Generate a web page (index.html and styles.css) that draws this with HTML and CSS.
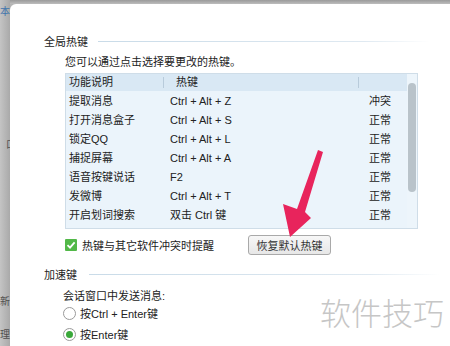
FILE: index.html
```html
<!DOCTYPE html>
<html lang="zh-CN">
  <head>
    <meta charset="UTF-8" />
    <meta name="viewport" content="width=device-width, initial-scale=1.0" />
    <title>热键设置</title>
    <link rel="stylesheet" href="styles.css">
  </head>
  <body>
    <div class="desk">
      <div class="side">
        <div class="side-char blue first">本</div>
        <div class="side-char c2">口</div>
        <div class="side-char c3">示</div>
        <div class="side-char c4">新</div>
        <div class="side-char c5">理</div>
      </div>
      <div class="main">
        <div class="topbar"></div>
        <div class="dialog">
          <div class="group-title">
            <span>全局热键</span>
            <div class="rule"></div>
          </div>
          <div class="desc">您可以通过点击选择要更改的热键。</div>

          <div class="table">
            <div class="cols">
              <div class="row head">
                <div class="c1">功能说明</div>
                <div class="c2">热键</div>
                <div class="c3"></div>
              </div>
              <div class="row"><div class="c1">提取消息</div><div class="c2">Ctrl + Alt + Z</div><div class="c3">冲突</div></div>
              <div class="row"><div class="c1">打开消息盒子</div><div class="c2">Ctrl + Alt + S</div><div class="c3">正常</div></div>
              <div class="row"><div class="c1">锁定QQ</div><div class="c2">Ctrl + Alt + L</div><div class="c3">正常</div></div>
              <div class="row"><div class="c1">捕捉屏幕</div><div class="c2">Ctrl + Alt + A</div><div class="c3">正常</div></div>
              <div class="row"><div class="c1">语音按键说话</div><div class="c2">F2</div><div class="c3">正常</div></div>
              <div class="row"><div class="c1">发微博</div><div class="c2">Ctrl + Alt + T</div><div class="c3">正常</div></div>
              <div class="row"><div class="c1">开启划词搜索</div><div class="c2">双击 Ctrl 键</div><div class="c3">正常</div></div>
            </div>
            <div class="scroll">
              <div class="thumb"></div>
            </div>
          </div>

          <div class="options">
            <label class="check">
              <span class="box">
                <svg width="12" height="12" viewBox="0 0 12 12"><path d="M2.5 6.2 L5 8.6 L9.6 3.4" fill="none" stroke="#fff" stroke-width="1.8"/></svg>
              </span>
              热键与其它软件冲突时提醒
            </label>
            <button class="reset">恢复默认热键</button>
          </div>

          <div class="group-title second">
            <span>加速键</span>
            <div class="rule"></div>
          </div>
          <div class="desc sub">会话窗口中发送消息:</div>
          <label class="radio"><span class="dot"></span>按Ctrl + Enter键</label>
          <label class="radio on"><span class="dot"></span>按Enter键</label>
        </div>
      </div>
    </div>

    <div class="watermark">软件技巧</div>

    <svg class="arrow" width="450" height="346" viewBox="0 0 450 346">
      <polygon points="318,150 323,152 305,212 311,218 290,237 283,204 297,209" fill="#e8245c"/>
    </svg>
  </body>
</html>
```

FILE: styles.css
```css
* {
  box-sizing: border-box;
}
body {
  margin: 0;
  width: 450px;
  height: 346px;
  overflow: hidden;
  font-family: "Liberation Sans", "Noto Sans CJK SC", sans-serif;
  font-size: 11px;
  color: #222;
  background: #b4b4b4;
}
.desk {
  display: flex;
  height: 346px;
}

/* background window peeking out on the left */
.side {
  width: 10px;
  overflow: hidden;
  background: linear-gradient(to right, #c4c4c4, #a9a9a9);
  font-size: 10px;
  line-height: 14px;
  color: #505050;
}
.side-char {
  margin-left: 0;
}
.side-char.blue {
  color: #3f74ad;
}
.first {
  margin-top: 5px;
}
.c2.side-char {
  margin-top: 119px;
}
.c3.side-char {
  margin-top: 18px;
}
.c4.side-char {
  margin-top: 111px;
}
.c5.side-char {
  margin-top: 19px;
}

.main {
  flex: 1;
  display: flex;
  flex-direction: column;
}
.topbar {
  height: 4px;
  background: linear-gradient(to bottom, #9a9a9a, #bdbdbd);
}
.dialog {
  flex: 1;
  background: #fff;
  border-radius: 6px 0 0 0;
  padding: 30px 0 0 34px;
}

.group-title {
  display: flex;
  align-items: center;
  height: 16px;
  line-height: 16px;
}
.group-title span {
  margin-right: 10px;
}
.rule {
  flex: 1;
  height: 1px;
  margin-top: -2px;
  margin-right: 20px;
  background: linear-gradient(to right, #c9dbe8, #dfe9f1 80%, #fff);
}
.group-title.second {
  margin-top: 12px;
}
.group-title.second span {
  margin-right: 12px;
}
.group-title.second .rule {
  margin-right: 10px;
}

.desc {
  margin: 4px 0 0 21px;
  line-height: 16px;
}
.desc.sub {
  margin: 5px 0 0 19px;
}

.table {
  display: flex;
  width: 353px;
  height: 156px;
  margin: 3px 0 0 21px;
  border: 1px solid #cfdde8;
  background: #ebf4fb;
  overflow: hidden;
}
.cols {
  flex: 1;
}
.row {
  display: flex;
  height: 19px;
  line-height: 19px;
  white-space: nowrap;
}
.row.head {
  height: 17px;
  line-height: 17px;
  background: #d9e8f4;
  margin-bottom: 1px;
}
.c1 {
  width: 97px;
  padding-left: 3px;
}
.c2 {
  width: 195px;
  padding-left: 6px;
}
.c3 {
  flex: 1;
  padding-left: 11px;
}
.head .c2 {
  padding-left: 12px;
  border-left: 1px solid #b8cbdb;
  height: 11px;
  line-height: 11px;
  margin-top: 3px;
}
.head .c3 {
  border-left: 1px solid #b8cbdb;
  height: 11px;
  margin-top: 3px;
}
.row:not(.head) .c2 {
  padding-left: 7px;
}
.scroll {
  width: 10px;
  padding: 9px 1px 0 1px;
  background: #edf5fb;
}
.thumb {
  width: 8px;
  height: 109px;
  border-radius: 4px;
  background: #b9c3ca;
}

.options {
  display: flex;
  align-items: center;
  height: 20px;
  margin: 6px 0 0 21px;
}
.check {
  display: flex;
  align-items: center;
  width: 183px;
}
.box {
  width: 12px;
  height: 12px;
  margin-right: 5px;
  background: #52b848;
  border-radius: 1px;
  display: flex;
}
.reset {
  height: 20px;
  width: 83px;
  padding: 0;
  font: inherit;
  color: #333;
  border: 1px solid #a9a9a9;
  border-radius: 3px;
  background: linear-gradient(to bottom, #f7f7f7, #e7e7e7);
}

.radio {
  display: flex;
  align-items: center;
  height: 18px;
  margin-left: 19px;
}
.radio + .radio {
  margin-top: 3px;
}
.dot {
  width: 13px;
  height: 13px;
  margin-right: 4px;
  border: 1px solid #9a9a9a;
  border-radius: 50%;
  background: #fff;
  display: flex;
  align-items: center;
  justify-content: center;
}
.radio.on .dot::after {
  content: "";
  width: 7px;
  height: 7px;
  border-radius: 50%;
  background: #3aa83a;
}

.watermark {
  position: absolute;
  left: 320px;
  top: 292px;
  font-family: "Noto Sans CJK SC", sans-serif;
  font-weight: 300;
  font-size: 31px;
  line-height: 40px;
  color: #c6c6c6;
}
.arrow {
  position: absolute;
  left: 0;
  top: 0;
  pointer-events: none;
}
```
